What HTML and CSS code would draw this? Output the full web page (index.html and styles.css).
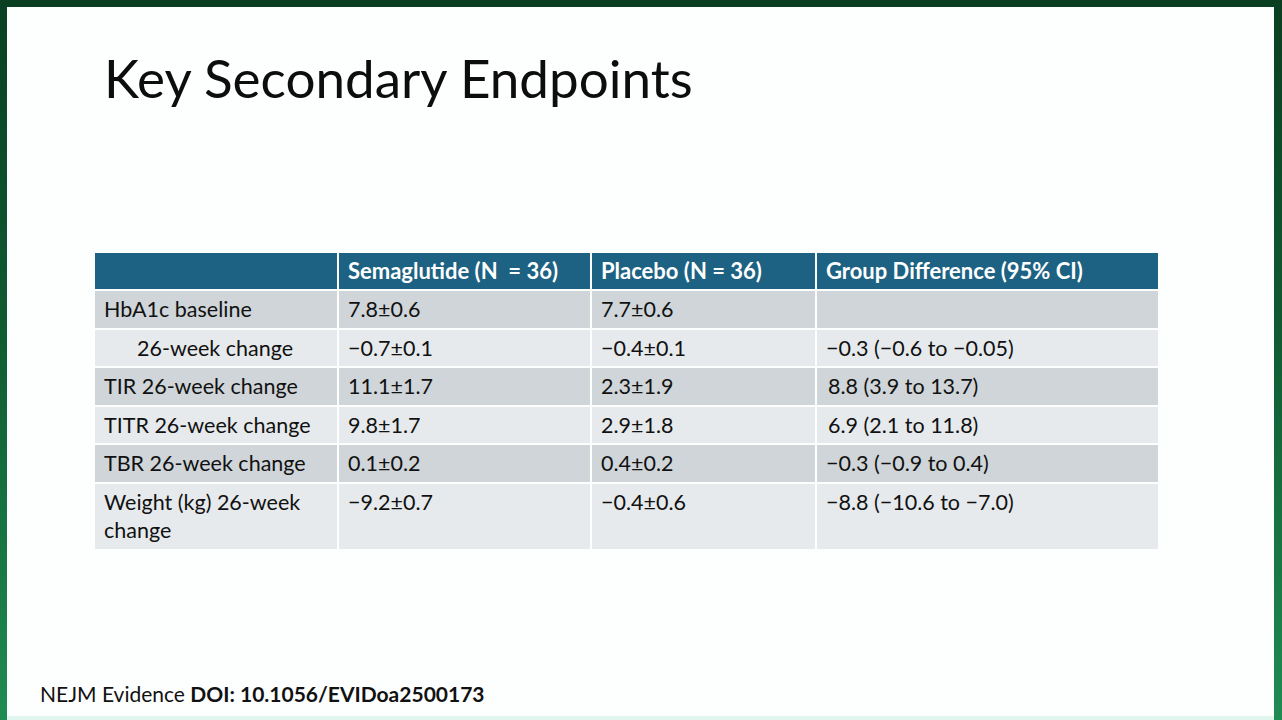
FILE: index.html
```html
<!DOCTYPE html>
<html lang="en">
<head>
<meta charset="utf-8">
<title>Key Secondary Endpoints</title>
<link rel="stylesheet" href="styles.css">
</head>
<body>
<div class="frame">
  <div class="slide">
    <h1 class="title">Key Secondary Endpoints</h1>
    <table class="data">
      <colgroup>
        <col class="c1"><col class="c2"><col class="c3"><col class="c4">
      </colgroup>
      <thead>
        <tr>
          <th></th>
          <th>Semaglutide (N&nbsp; = 36)</th>
          <th>Placebo (N = 36)</th>
          <th>Group Difference (95% CI)</th>
        </tr>
      </thead>
      <tbody>
        <tr class="dark">
          <td>HbA1c baseline</td><td>7.8±0.6</td><td>7.7±0.6</td><td></td>
        </tr>
        <tr class="light">
          <td class="indent">26-week change</td><td>−0.7±0.1</td><td>−0.4±0.1</td><td>−0.3 (−0.6 to −0.05)</td>
        </tr>
        <tr class="dark">
          <td>TIR 26-week change</td><td>11.1±1.7</td><td>2.3±1.9</td><td class="lead">8.8 (3.9 to 13.7)</td>
        </tr>
        <tr class="light">
          <td>TITR 26-week change</td><td>9.8±1.7</td><td>2.9±1.8</td><td class="lead">6.9 (2.1 to 11.8)</td>
        </tr>
        <tr class="dark">
          <td>TBR 26-week change</td><td>0.1±0.2</td><td>0.4±0.2</td><td>−0.3 (−0.9 to 0.4)</td>
        </tr>
        <tr class="light">
          <td>Weight (kg) 26-week<br>change</td><td>−9.2±0.7</td><td>−0.4±0.6</td><td>−8.8 (−10.6 to −7.0)</td>
        </tr>
      </tbody>
    </table>
    <div class="spacer"></div>
    <p class="source">NEJM Evidence <strong>DOI: 10.1056/EVIDoa2500173</strong></p>
  </div>
</div>
</body>
</html>
```
FILE: styles.css
```css
html, body {
  margin: 0;
  padding: 0;
}
body {
  width: 1282px;
  height: 720px;
  overflow: hidden;
  font-family: Lato, "Open Sans", sans-serif;
  color: #111;
}
.frame {
  width: 1282px;
  height: 720px;
  box-sizing: border-box;
  padding: 7px 8px 0 7px;
  background: linear-gradient(to bottom, #0a3f22 0%, #0f5a31 45%, #1f8c52 100%);
  display: flex;
}
.slide {
  flex: 1;
  background: #fdfefe;
  border-bottom: 4px solid #e2f6f0;
  display: flex;
  flex-direction: column;
}
.title {
  margin: 39px 0 0 97px;
  font-weight: 400;
  font-size: 53px;
  line-height: 64px;
  color: #0d0d0d;
}
.data {
  margin: 143px 0 0 88px;
  border-collapse: separate;
  border-spacing: 0;
  table-layout: fixed;
  width: 1063px;
  font-size: 21.5px;
  line-height: 28px;
}
.c1 { width: 244px; }
.c2 { width: 253px; }
.c3 { width: 225px; }
.c4 { width: 341px; }
.data th, .data td {
  padding: 4px 9px 4.6px 9px;
  text-align: left;
  vertical-align: top;
  border-right: 2px solid #fdfefe;
  border-bottom: 2px solid #fdfefe;
  white-space: nowrap;
}
.data th:last-child, .data td:last-child {
  border-right: 0;
}
.data th {
  background: #1d6282;
  color: #fff;
  font-weight: 700;
  font-size: 22px;
  padding-top: 4px;
  padding-bottom: 4px;
}
.dark td { background: #cfd5d8; }
.light td { background: #e6eaec; }
.data .indent { padding-left: 42px; }
.data .lead { padding-left: 11px; }
.spacer { flex: 1; }
.source {
  margin: 0 0 8px 33px;
  font-size: 21px;
  line-height: 28px;
  color: #111;
}
.source strong { font-weight: 700; }
```
